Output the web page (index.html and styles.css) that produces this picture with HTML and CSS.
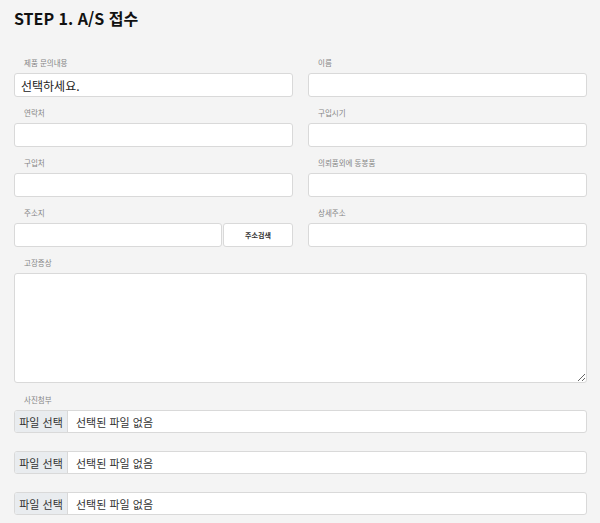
FILE: index.html
```html
<!DOCTYPE html>
<html lang="ko">
<head>
<meta charset="utf-8">
<title>STEP 1. A/S 접수</title>
<link rel="stylesheet" href="styles.css">
</head>
<body>
<div class="page">
  <h1 class="title">STEP 1. A/S 접수</h1>
  <form class="form">
    <div class="grid">
      <div class="field">
        <label class="lbl">제품 문의내용</label>
        <select class="ctl sel"><option>선택하세요.</option></select>
      </div>
      <div class="field">
        <label class="lbl">이름</label>
        <input class="ctl" type="text">
      </div>
      <div class="field">
        <label class="lbl">연락처</label>
        <input class="ctl" type="text">
      </div>
      <div class="field">
        <label class="lbl">구입시기</label>
        <input class="ctl" type="text">
      </div>
      <div class="field">
        <label class="lbl">구입처</label>
        <input class="ctl" type="text">
      </div>
      <div class="field">
        <label class="lbl">의뢰품외에 동봉품</label>
        <input class="ctl" type="text">
      </div>
      <div class="field">
        <label class="lbl">주소지</label>
        <div class="addr">
          <input class="ctl" type="text">
          <button class="btn" type="button">주소검색</button>
        </div>
      </div>
      <div class="field">
        <label class="lbl">상세주소</label>
        <input class="ctl" type="text">
      </div>
    </div>
    <div class="field">
      <label class="lbl">고장증상</label>
      <textarea class="ctl area"></textarea>
    </div>
    <div class="field">
      <label class="lbl lbl-photo">사진첨부</label>
      <div class="files">
        <div class="file"><span class="file-btn">파일 선택</span><span class="file-name">선택된 파일 없음</span></div>
        <div class="file"><span class="file-btn">파일 선택</span><span class="file-name">선택된 파일 없음</span></div>
        <div class="file"><span class="file-btn">파일 선택</span><span class="file-name">선택된 파일 없음</span></div>
      </div>
    </div>
  </form>
</div>
</body>
</html>
```
FILE: styles.css
```css
* { box-sizing: border-box; }
html, body { margin: 0; padding: 0; }
body {
  background: #f4f4f4;
  font-family: "Noto Sans CJK KR", "Noto Sans", sans-serif;
  color: #222;
}
.page {
  padding: 7px 13px 0 14px;
  width: 600px;
}
.title {
  margin: 0;
  font-size: 16px;
  line-height: 22px;
  font-weight: 700;
  color: #111;
  height: 49px;
}
.form {
  display: flex;
  flex-direction: column;
  gap: 9px;
  width: 573px;
}
.grid {
  display: grid;
  grid-template-columns: 279px 279px;
  column-gap: 15px;
  row-gap: 9px;
}
.field {
  display: flex;
  flex-direction: column;
  gap: 3px;
}
.lbl {
  display: block;
  font-size: 7.5px;
  line-height: 14px;
  height: 14px;
  color: #858585;
  padding-left: 10px;
}
.ctl {
  display: block;
  width: 100%;
  height: 24px;
  margin: 0;
  border: 1px solid #d9d9d9;
  border-radius: 3px;
  background: #fff;
  font-family: inherit;
  font-size: 12px;
  color: #222;
  padding: 0 6px;
  outline: none;
}
.sel {
  appearance: none;
  -webkit-appearance: none;
  padding-left: 6px;
}
.addr {
  display: flex;
  gap: 1px;
}
.addr .ctl {
  flex: 1;
}
.btn {
  width: 70px;
  height: 24px;
  margin: 0;
  border: 1px solid #d9d9d9;
  border-radius: 3px;
  background: #fff;
  font-family: inherit;
  font-size: 7px;
  font-weight: 700;
  color: #333;
  padding: 0;
}
.area {
  height: 110px;
  resize: vertical;
  padding: 6px;
}
.lbl-photo { margin-top: 1px; }
.files {
  display: flex;
  flex-direction: column;
  gap: 18px;
}
.file {
  display: flex;
  align-items: stretch;
  height: 23px;
  border: 1px solid #d9d9d9;
  border-radius: 3px;
  background: #fff;
  overflow: hidden;
}
.file-btn {
  display: flex;
  align-items: center;
  justify-content: center;
  width: 53px;
  background: #e9ecef;
  border-right: 1px solid #d9d9d9;
  font-size: 11px;
  color: #333;
}
.file-name {
  display: flex;
  align-items: center;
  padding-left: 8px;
  font-size: 11px;
  color: #333;
}
```
